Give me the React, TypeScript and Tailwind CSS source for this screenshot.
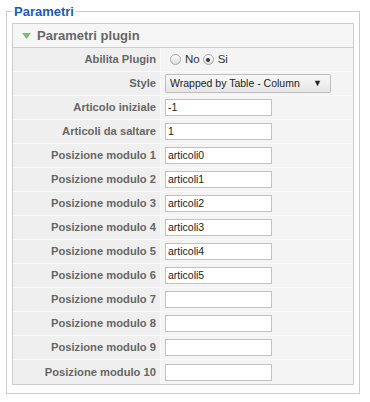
import React from "react";

const rows: { label: string; value: string }[] = [
  { label: "Articolo iniziale", value: "-1" },
  { label: "Articoli da saltare", value: "1" },
  { label: "Posizione modulo 1", value: "articoli0" },
  { label: "Posizione modulo 2", value: "articoli1" },
  { label: "Posizione modulo 3", value: "articoli2" },
  { label: "Posizione modulo 4", value: "articoli3" },
  { label: "Posizione modulo 5", value: "articoli4" },
  { label: "Posizione modulo 6", value: "articoli5" },
  { label: "Posizione modulo 7", value: "" },
  { label: "Posizione modulo 8", value: "" },
  { label: "Posizione modulo 9", value: "" },
  { label: "Posizione modulo 10", value: "" },
];

function Row({ label, children }: { label: string; children: React.ReactNode }) {
  return (
    <div className="flex h-[24px] border-b border-[#fafafa] last:border-b-0">
      <div className="w-[148px] shrink-0 bg-[#efefef] border-r border-[#fafafa] flex items-center justify-end pr-[4px] text-[11.2px] font-bold text-[#666]">
        {label}
      </div>
      <div className="flex-1 bg-[#f4f4f4] flex items-center pl-[4px]">{children}</div>
    </div>
  );
}

function Radio({ checked }: { checked?: boolean }) {
  return (
    <span className="inline-flex w-[11px] h-[11px] rounded-full border border-[#a8a8a8] bg-gradient-to-b from-[#fdfdfd] to-[#dcdcdc] items-center justify-center">
      {checked && <span className="w-[4px] h-[4px] rounded-full bg-[#333]" />}
    </span>
  );
}

export default function App() {
  return (
    <div className="w-[370px] h-[402px] bg-white pt-[4px]" style={{ fontFamily: '"Liberation Sans", Arial, sans-serif' }}>
      <fieldset className="ml-[6px] w-[354px] border border-[#cccccc] px-[5px] pt-[4px] pb-[8px]">
        <legend className="ml-0 px-[2px] text-[13px] leading-[15px] font-bold text-[#1b5cb5]">Parametri</legend>
        <div className="border border-[#cccccc]">
          <div className="h-[24px] bg-[#f6f6f6] border-b border-[#cccccc] flex items-center pl-[9px]">
            <svg width="10" height="8" viewBox="0 0 10 8" className="mr-[5px]">
              <polygon points="0,1 9,1 4.5,7" fill="#7bbf6a" />
            </svg>
            <span className="text-[13px] font-bold text-[#666]">Parametri plugin</span>
          </div>
          <Row label="Abilita Plugin">
            <div className="flex items-center text-[11.5px] text-[#333] pl-[5px]">
              <Radio />
              <span className="ml-[4px] mr-[3px]">No</span>
              <Radio checked />
              <span className="ml-[4px]">Si</span>
            </div>
          </Row>
          <Row label="Style">
            <div className="w-[166px] h-[19px] border border-[#bdbdbd] rounded-[2px] bg-gradient-to-b from-[#f8f8f8] to-[#e6e6e6] flex items-center justify-between px-[4px] text-[10.5px] text-[#222]">
              <span>Wrapped by Table - Column</span>
              <span className="text-[9px] mr-[4px]">▼</span>
            </div>
          </Row>
          {rows.map((r) => (
            <Row key={r.label} label={r.label}>
              <div className="w-[107px] h-[17px] border border-[#c2c2c2] bg-white flex items-center pl-[2px] text-[10.5px] text-[#222]">
                {r.value}
              </div>
            </Row>
          ))}
        </div>
      </fieldset>
    </div>
  );
}
